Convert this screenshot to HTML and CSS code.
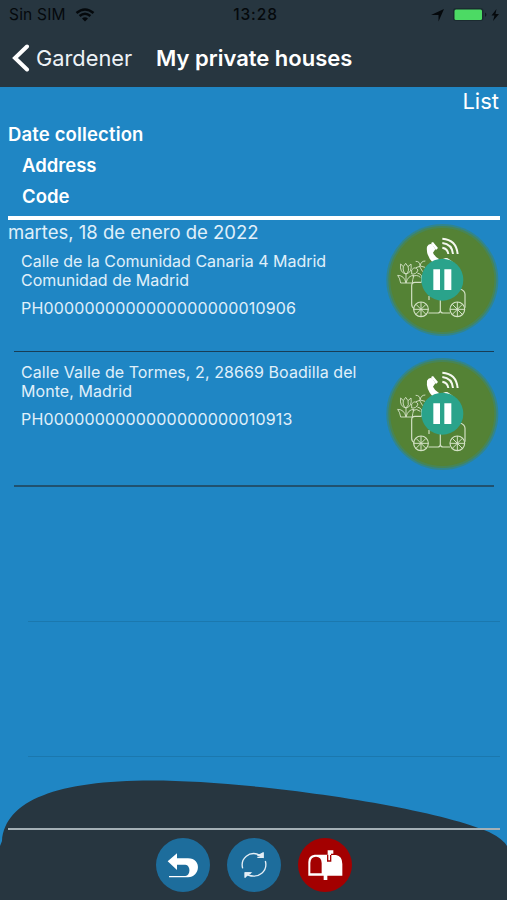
FILE: index.html
```html
<!DOCTYPE html>
<html lang="en">
<head>
    <meta charset="UTF-8">
    <meta name="viewport" content="width=device-width, initial-scale=1.0">
    <title>My private houses</title>
    <link rel="stylesheet" href="styles.css">
</head>
<body>
    <!-- shared cart icon -->
    <svg class="defs" width="0" height="0">
        <symbol id="cart" viewBox="15 24 342 342">
            <circle cx="187" cy="195" r="168" fill="#3d8669" opacity=".6"/>
            <circle cx="187" cy="195" r="162" fill="#4d8449" opacity=".8"/>
            <circle cx="187" cy="195" r="156" fill="#548235"/>
            <g fill="none" stroke="#d3e1c5" stroke-width="3.5">
                <path d="M103 280q-8-2-8-12v-56q0-10 10-10h20M125 202v-20M145 294h28q8 0 8-10v-34M181 284q0 10 9 10h20M240 222q15 5 15 16v40M147 255v-12"/>
                <circle cx="123" cy="283" r="22"/>
                <circle cx="232" cy="283" r="22"/>
                <path d="M123 261v44M101 283h44M108 268l30 30M138 268l-30 30M232 261v44M210 283h44M217 268l30 30M247 268l-30 30" stroke-width="3"/>
                <g stroke-width="2.8">
                    <path d="M62 147l8 8 7-10 7 10 9-8q4 26-15 30-20-4-16-30zM70 155q-3 15 8 22M84 155q5 14-6 22M78 177v27M53 181q20 0 25 23h-16q-2-14-9-23zM102 181q-18 0-24 23h19q0-10 5-23zM95 165q10-13 19 0-5 14-19 12zM112 174q10 2 14 10M98 185q12-8 23 2"/>
                    <path d="M107 139q13 0 13 13M136 138q-14 0-16 16M108 158q14-9 27-1M118 153l10 17"/>
                </g>
            </g>
            <path d="M141 95Q146 84 157 88L166 103L159 113Q164 125 178 133L160 145Q137 121 141 95Z" fill="#fff"/>
            <path d="M153 84l6-3 15 18-6 6zM183 137q10-11 20-7l15 10-24 6z" fill="#fff"/>
            <g fill="none" stroke="#f5f8ef" stroke-width="6">
                <path d="M187 71q42 3 46 46"/>
                <path d="M187 84q29 3 32 33"/>
                <path d="M187 98q16 3 18 19"/>
            </g>
            <circle cx="187" cy="194" r="63" fill="#2aa38b"/>
            <path d="M160 163h20v62h-20zM193 163h21v62h-21z" fill="#fff"/>
        </symbol>
    </svg>

    <div class="app">
        <header class="header">
            <div class="status">
                <div class="status-left">
                    <span>Sin SIM</span>
                    <svg width="20" height="14" viewBox="0 0 20 14" fill="none" stroke="#05090c" stroke-width="2.6">
                        <path d="M1.500 5Q10-2 18.500 5M4.600 8Q10 3.500 15.400 8"/>
                        <path d="M7 10.500q3-2.400 6 0L10 13.500z" fill="#05090c" stroke="none"/>
                    </svg>
                </div>
                <span class="clock">13:28</span>
                <div class="status-right">
                    <svg width="70" height="16" viewBox="0 0 70 16">
                        <path d="M-1 8L12 2 6.500 14.500V8z" fill="#05090c"/>
                        <rect x="21" y="1" width="30.500" height="13" rx="3" fill="#1b2b30"/>
                        <rect x="22.500" y="2.500" width="27.500" height="10.500" rx="1.500" fill="#4cda64"/>
                        <path d="M53 5.500q3 2.200 0 4.500z" fill="#101b1f"/>
                        <path d="M64.500 2l-5 6.500h3L61 14l6-7h-3.500z" fill="#05090c"/>
                    </svg>
                </div>
            </div>
            <nav class="nav">
                <a class="back" href="#">
                    <svg width="18" height="28" viewBox="0 0 18 28" fill="none" stroke="#fff" stroke-width="4" stroke-linecap="round">
                        <path d="M15 2.500L3 14l12 11.500"/>
                    </svg>
                    <span>Gardener</span>
                </a>
                <h1 class="title">My private houses</h1>
            </nav>
        </header>

        <main class="content">
            <div class="list-label">List</div>
            <div class="columns">
                <div class="column-date">Date collection</div>
                <div>Address</div>
                <div>Code</div>
            </div>

            <section class="house first">
                <div class="house-text">
                    <h2 class="date">martes, 18 de enero de 2022</h2>
                    <p class="address">Calle de la Comunidad Canaria 4 Madrid<br>Comunidad de Madrid</p>
                    <p class="code">PH0000000000000000000010906</p>
                </div>
                <svg class="cart"><use href="#cart"/></svg>
            </section>
            <section class="house second">
                <div class="house-text">
                    <p class="address">Calle Valle de Tormes, 2, 28669 Boadilla del<br>Monte, Madrid</p>
                    <p class="code">PH0000000000000000000010913</p>
                </div>
                <svg class="cart"><use href="#cart"/></svg>
            </section>
            <div class="empty-row"></div>
            <div class="empty-row"></div>
        </main>

        <footer class="footer">
            <svg class="wave" width="507" height="120" viewBox="0 0 507 120">
                <path d="M0 66L2 61C5 20 58 .5 152 .5C250 .5 430 26 489 52Q503 59 507 66V120H0z" fill="#273640"/>
            </svg>
            <div class="toolbar">
                <button class="tool" aria-label="Back">
                    <svg width="54" height="54" viewBox="0 0 162 162">
                        <path d="M35 70L63 46V61H96C139 61 133 118 96 118H39V114H88C104 114 105 81 88 80H63V96Z" fill="#fff"/>
                    </svg>
                </button>
                <button class="tool" aria-label="Refresh">
                    <svg width="54" height="54" viewBox="0 0 162 162" fill="none" stroke="#e4eef5" stroke-width="4">
                        <path d="M47 91C39 61 67 37 98 51M115 69C123 99 96 123 63 111M91 58h17V44M54 119v-14h17"/>
                        <path d="M94 52l14-7v13zM56 105h14l-14 10z" fill="#e4eef5"/>
                    </svg>
                </button>
                <button class="tool mailbox" aria-label="Mailbox">
                    <svg width="54" height="54" viewBox="0 0 162 162">
                        <path d="M31 113V72Q31 52 50 50H89V37H106V47H99V51H114Q133 54 133 78V113H88V126H77V113Z" fill="#fff"/>
                        <path d="M37 106V75Q38 56 54 56T71 75V106Z" fill="#a30000"/>
                        <path d="M89 50V69H98V51" fill="none" stroke="#a30000" stroke-width="4"/>
                    </svg>
                </button>
            </div>
        </footer>
    </div>
</body>
</html>
```
FILE: styles.css
```css
* {
    box-sizing: border-box;
}

body {
    margin: 0;
    font-family: Inter, "Liberation Sans", sans-serif;
    color: #fff;
    background-color: #1f86c4;
}

.defs {
    display: block;
}

.app {
    display: flex;
    flex-direction: column;
    width: 507px;
    height: 900px;
    overflow: hidden;
}

/* header */
.header {
    height: 87px;
    background-color: #273640;
}

.status {
    display: grid;
    grid-template-columns: 1fr auto 1fr;
    align-items: center;
    height: 29px;
    padding: 0 5px 0 9px;
    color: #05090c;
    font-size: 15.5px;
}

.status-left {
    display: flex;
    align-items: center;
    gap: 9px;
    letter-spacing: 0.2px;
}

.status-right {
    display: flex;
    justify-content: flex-end;
}

.status-right svg {
    overflow: visible;
}

.clock {
    font-weight: 500;
    letter-spacing: 0.9px;
}

.nav {
    display: flex;
    align-items: center;
    height: 58px;
    padding-left: 12px;
}

.back {
    display: flex;
    align-items: center;
    gap: 6px;
    width: 144px;
    color: #edf2f6;
    text-decoration: none;
    font-size: 21.8px;
}

.back span {
    margin-top: -1px;
}

.title {
    margin: -1px 0 0;
    font-size: 22px;
    font-weight: 600;
    white-space: nowrap;
}

/* list */
.content {
    height: 693px;
    padding: 0 7px 0 8px;
}

.list-label {
    height: 32px;
    padding-right: 1px;
    line-height: 28px;
    font-size: 22px;
    text-align: right;
}

.columns {
    height: 101px;
    padding-left: 14px;
    border-bottom: 4px solid #fff;
    font-size: 18.5px;
    font-weight: 600;
    line-height: 31px;
}

.column-date {
    margin-left: -14px;
    letter-spacing: 0.15px;
}

.house {
    display: flex;
    justify-content: space-between;
    margin-left: 6px;
    margin-right: 6px;
    border-bottom: 2px solid #20516f;
}

.first {
    height: 132px;
    border-bottom-width: 1px;
    border-bottom-color: #183d56;
}

.second {
    height: 135px;
}

.house-text {
    padding-left: 7px;
    white-space: nowrap;
}

.date {
    margin: 0 0 7px -13px;
    font-size: 18.5px;
    font-weight: 400;
    line-height: 24px;
    color: #e0f0fa;
}

.address {
    margin: 0;
    padding-top: 1px;
    font-size: 16px;
    line-height: 19px;
    color: #e0f0fa;
}

.second .address {
    margin-top: 10px;
    letter-spacing: 0.07px;
}

.code {
    margin: 9px 0 0;
    font-size: 16px;
    line-height: 19px;
    letter-spacing: 0.17px;
    color: #e0f0fa;
}

.cart {
    flex: none;
    width: 114px;
    height: 114px;
    margin: 3px -5px 0 0;
}

.second .cart {
    margin-top: 5px;
}

.empty-row {
    height: 135px;
    margin-left: 20px;
    border-bottom: 1px solid #1b78ae;
}

/* bottom bar */
.footer {
    display: grid;
    height: 120px;
}

.wave,
.toolbar {
    grid-area: 1 / 1;
}

.toolbar {
    display: flex;
    justify-content: center;
    gap: 17px;
    margin: 48px 7px 0 8px;
    padding-top: 8px;
    border-top: 2px solid #a4b0b6;
}

.tool {
    width: 54px;
    height: 54px;
    padding: 0;
    border: none;
    border-radius: 50%;
    background-color: #1d6d9c;
}

.tool svg {
    display: block;
}

.mailbox {
    background-color: #a30000;
}
```
